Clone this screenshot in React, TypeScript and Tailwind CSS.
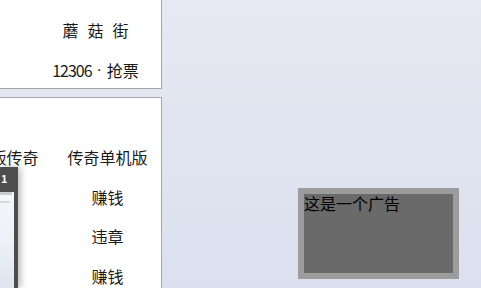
import React from "react";

const FONT = { fontFamily: '"Noto Sans CJK SC", "Liberation Sans", sans-serif' };

const RIGHT_COL = ["传奇单机版", "赚钱", "违章", "赚钱"];

// Overlapping dark window at the bottom-left edge
function PeekWindow() {
  return (
    <div className="absolute left-0 top-[167px] h-[121px] w-[18px] bg-[#4d4d4d] shadow-[3px_0_6px_rgba(0,0,0,0.25)]">
      <div className="pl-[1px] pt-[6px] text-[11px] font-bold leading-[11px] text-white">1</div>
      <div className="mt-[8px] h-[96px] w-[14px] bg-gradient-to-b from-[#f4f6fa] via-[#eef1f7] to-[#dde5f0]">
        <div className="h-[3px] w-[12px] bg-[#c9ccd2]" />
        <div className="mt-[6px] h-[2px] w-[10px] bg-[#d6d9de]" />
      </div>
    </div>
  );
}

export default function App() {
  return (
    <div
      className="relative flex h-[288px] w-[481px] overflow-hidden bg-gradient-to-b from-[#e6e9f3] to-[#dbe0ee] text-[16px] leading-[16px] text-[#1a1a1a]"
      style={FONT}
    >
      {/* Left column of panels */}
      <div className="flex w-[162px] flex-col">
        <div className="h-[89px] border-b border-r border-[#a3a6ab] bg-white pl-[30px] pt-[22px] text-center">
          <div className="flex justify-center gap-[9px]">
            <span>蘑</span>
            <span>菇</span>
            <span>街</span>
          </div>
          <div className="mt-[24px] flex items-center justify-center">
            <span className="tracking-[-1px]">12306</span>
            <span className="mx-[5px] font-['Liberation_Sans',sans-serif]">·</span>
            <span>抢票</span>
          </div>
        </div>
        <div className="mt-[8px] flex-1 overflow-hidden border-r border-t border-[#a3a6ab] bg-white">
          <div className="ml-[-56px] flex pt-[51px]">
            <div className="w-[109px] shrink-0 text-center">单机版传奇</div>
            <div className="flex w-[109px] shrink-0 flex-col gap-[23.5px] text-center">
              {RIGHT_COL.map((t, i) => (
                <div key={i}>{t}</div>
              ))}
            </div>
          </div>
        </div>
      </div>

      {/* Right area with floating ad */}
      <div className="flex-1 pl-[136px] pt-[188px]">
        <div className="h-[91px] w-[161px] border-[6px] border-[#9b9c9b] bg-[#6a6a6a]">
          <div className="pt-[1px] text-black">这是一个广告</div>
        </div>
      </div>

      <PeekWindow />
    </div>
  );
}
